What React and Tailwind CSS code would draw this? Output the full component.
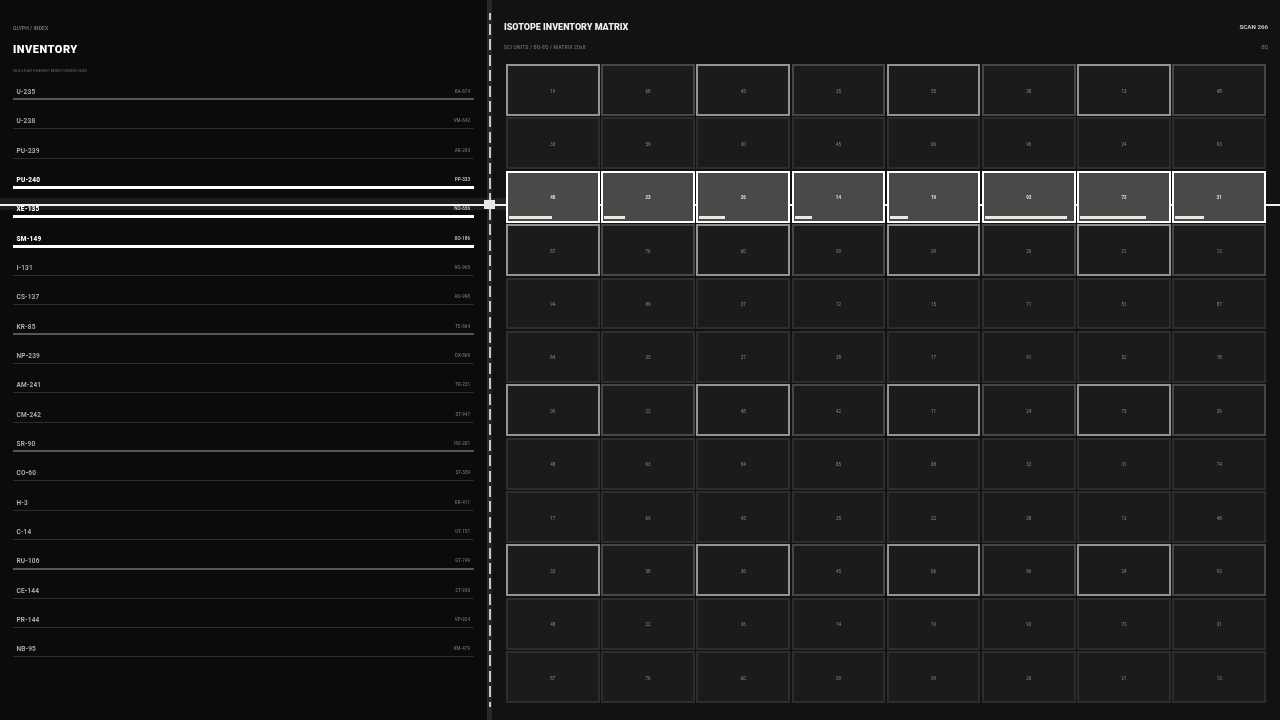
const isotopes = [
  { name: "U-235", code: "KA-674", level: "mid" },
  { name: "U-238", code: "VM-642", level: "low" },
  { name: "PU-239", code: "AR-293", level: "low" },
  { name: "PU-240", code: "PP-333", level: "high" },
  { name: "XE-135", code: "NO-656", level: "high" },
  { name: "SM-149", code: "XO-186", level: "high" },
  { name: "I-131", code: "RG-965", level: "low" },
  { name: "CS-137", code: "AU-998", level: "low" },
  { name: "KR-85", code: "TE-664", level: "mid" },
  { name: "NP-239", code: "DX-869", level: "low" },
  { name: "AM-241", code: "TR-231", level: "low" },
  { name: "CM-242", code: "ST-947", level: "low" },
  { name: "SR-90", code: "HU-201", level: "mid" },
  { name: "CO-60", code: "ST-339", level: "low" },
  { name: "H-3", code: "KR-411", level: "low" },
  { name: "C-14", code: "UT-151", level: "low" },
  { name: "RU-106", code: "GT-749", level: "mid" },
  { name: "CE-144", code: "CT-936", level: "low" },
  { name: "PR-144", code: "VP-924", level: "low" },
  { name: "NB-95", code: "KM-479", level: "low" },
];

const rows = [
  ["19", "68", "45", "35", "55", "38", "13", "48"],
  ["33", "59", "30", "45", "06", "96", "24", "93"],
  ["48", "23", "26", "14", "19", "93", "72", "31"],
  ["87", "76", "60", "09", "39", "26", "21", "13"],
  ["94", "89", "37", "12", "15", "71", "51", "87"],
  ["84", "35", "27", "38", "17", "91", "52", "18"],
  ["09", "22", "48", "42", "11", "24", "73", "39"],
  ["48", "63", "84", "85", "68", "32", "31", "74"],
  ["17", "69", "45", "35", "22", "38", "12", "48"],
  ["33", "58", "36", "45", "06", "96", "24", "93"],
  ["48", "22", "26", "14", "19", "93", "73", "31"],
  ["87", "76", "60", "09", "39", "26", "21", "13"],
];

// rows with outlined cells, every other column is strong
const accentRows = [0, 3, 6, 9];

const barWidths = [48, 23, 29, 19, 20, 92, 73, 32];

function IsotopeRow({ item }) {
  const line =
    item.level === "high"
      ? "h-[3px] bg-white"
      : item.level === "mid"
        ? "h-[2px] bg-[#555755]"
        : "h-px bg-[#2b2c2b]";
  const nameColor =
    item.level === "high" ? "text-white font-extrabold" : "text-[#b4b5b4] font-semibold";
  const codeColor = item.level === "high" ? "text-[#d0d0d0] font-medium" : "text-[#6f706f] font-medium";

  return (
    <div className="h-[29.34px] flex flex-col justify-end">
      <div className="flex justify-between items-center pl-[3.5px] pr-[4px] pb-[1px]">
        <span className={`text-[6.5px] leading-[10px] tracking-[0.2px] ${nameColor}`}>{item.name}</span>
        <span className={`text-[4.5px] leading-[10px] tracking-[0.05px] ${codeColor}`}>{item.code}</span>
      </div>
      <div className="h-[3px] flex items-center">
        <div className={`w-full ${line}`} />
      </div>
    </div>
  );
}

function Cell({ value, rowIndex, colIndex }) {
  if (rowIndex === 2) {
    return (
      <div className="relative flex-1 min-w-0 h-full bg-[#484a48] border-2 border-white flex items-center justify-center pt-[4px]">
        <span className="text-[4.5px] font-bold text-[#e4e4e4]">{value}</span>
        <div
          className="absolute left-[1px] bottom-[2px] h-[3px] bg-[#e9e9e4]"
          style={{ width: `${barWidths[colIndex]}%` }}
        />
      </div>
    );
  }

  const isAccent = accentRows.includes(rowIndex);
  const isStrong = isAccent && colIndex % 2 === 0;
  let border = "border-[#2c2d2c]";
  if (isStrong) border = "border-[#929392]";
  else if (isAccent) border = "border-[#454645]";

  return (
    <div className={`flex-1 min-w-0 h-full bg-[#1a1b1a] border-2 flex items-center justify-center pt-[4px] ${border}`}>
      <span className="text-[4.5px] text-[#8a8b8a]">{value}</span>
    </div>
  );
}

export default function App() {
  return (
    <div className="relative w-[1280px] h-[720px] overflow-hidden flex bg-[#111211] font-['Roboto',sans-serif] will-change-transform">
      {/* left list */}
      <aside className="w-[487px] h-full bg-[#0a0b0a] px-[13px] pt-[25px]">
        <div className="text-[5px] leading-[6px] tracking-[0.1px] text-[#808180] font-medium">GLYPH / INDEX</div>
        <h1 className="mt-[12px] text-[11px] leading-[14px] font-black tracking-[0.5px] text-white">INVENTORY</h1>
        <div className="mt-[11px] text-[4px] leading-[6px] tracking-[0.2px] text-[#5c5d5c] font-medium">NUCLEAR ENERGY MONITORING HUD</div>
        <div className="-mt-[2.35px]">
          {isotopes.map((item) => (
            <IsotopeRow key={item.name} item={item} />
          ))}
        </div>
      </aside>

      {/* dashed divider */}
      <div className="w-[5px] h-full bg-[#262726] flex justify-center py-[13px]">
        <div className="w-[2px] h-full bg-[repeating-linear-gradient(to_bottom,#c8c9c8_-4.4px,#c8c9c8_6.6px,transparent_6.6px,transparent_11px)]" />
      </div>

      {/* scan line, runs behind the matrix cells */}
      <div className="absolute left-0 top-[198px] h-[12px] w-[506px] bg-white/7" />
      <div className="absolute left-0 right-0 top-[204px] h-[2px] bg-[#efefef]" />
      <div className="absolute left-[484px] top-[200px] w-[11px] h-[9px] bg-[#e9e9e4]" />

      {/* matrix */}
      <main className="relative flex-1 min-w-0 flex flex-col px-[12px] pt-[22px]">
        <div className="flex justify-between items-center h-[11px]">
          <h2 className="text-[9px] font-black text-[#efefef]">ISOTOPE INVENTORY MATRIX</h2>
          <span className="text-[6.2px] font-semibold text-[#d8d8d8]">SCAN 266</span>
        </div>
        <div className="flex justify-between items-center h-[8px] mt-[11px]">
          <span className="text-[5px] tracking-[0.15px] text-[#6f706f] font-medium">SCI UNITS / BQ-EQ / MATRIX 20x8</span>
          <span className="text-[5px] text-[#6f706f] font-medium">BQ</span>
        </div>
        <div className="mx-[2px] mt-[12px] flex flex-col gap-[1.5px] h-[639px]">
          {rows.map((row, rowIndex) => (
            <div key={rowIndex} className="flex-1 min-h-0 flex gap-[1.5px]">
              {row.map((value, colIndex) => (
                <Cell key={colIndex} value={value} rowIndex={rowIndex} colIndex={colIndex} />
              ))}
            </div>
          ))}
        </div>
      </main>
    </div>
  );
}
